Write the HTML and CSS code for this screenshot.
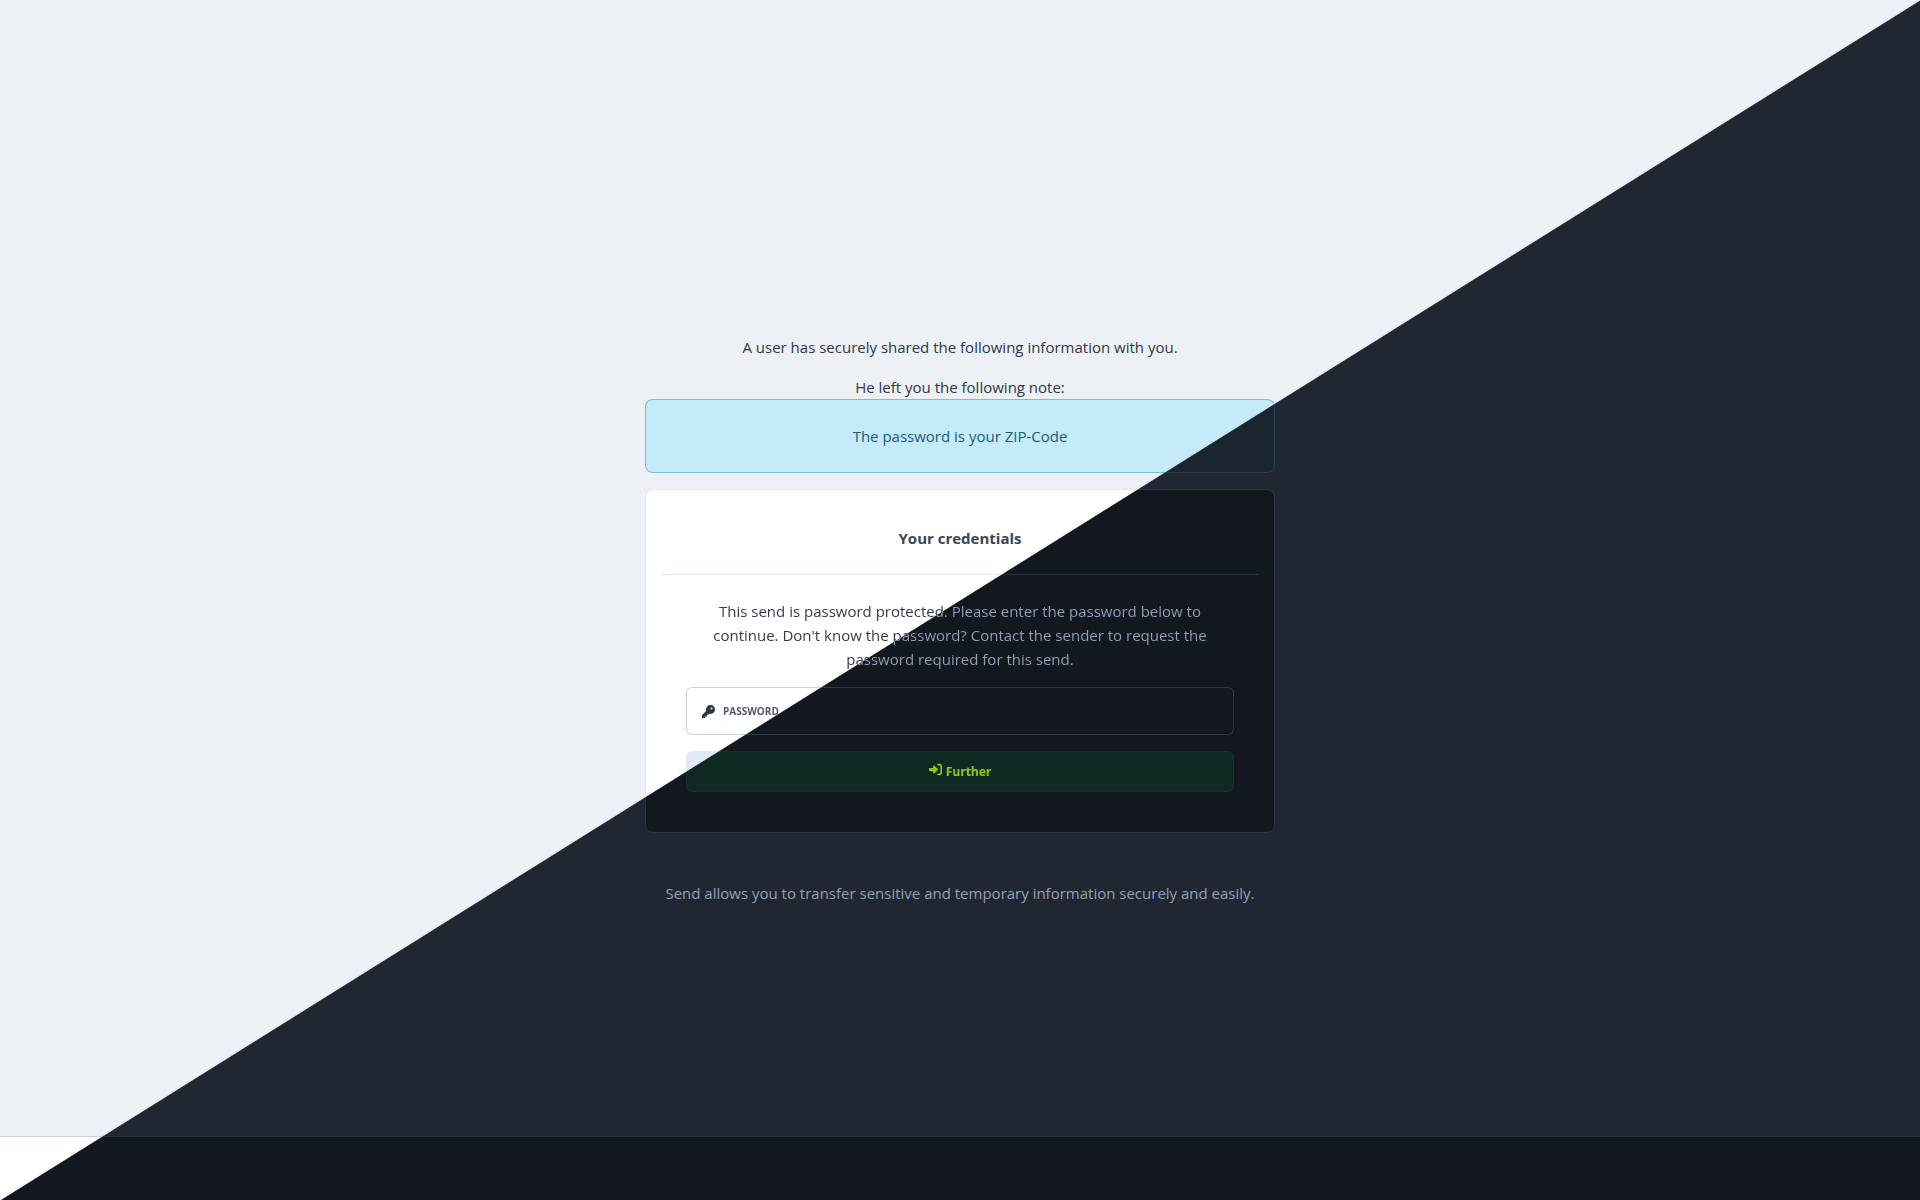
FILE: index.html
```
<!DOCTYPE html>
<html lang="en">
<head>
    <meta charset="UTF-8">
    <meta name="viewport" content="width=device-width, initial-scale=1.0">
    <title>Send</title>
    <link rel="stylesheet" href="styles.css">
</head>
<body>

    <main class="send">
        <div class="send-content">
            <p class="intro">A user has securely shared the following information with you.</p>
            <p class="intro">He left you the following note:</p>

            <!-- Note of the sender -->
            <div class="note">The password is your ZIP-Code</div>

            <!-- Password form -->
            <form class="card">
                <h1 class="card-title">Your credentials</h1>
                <div class="card-body">
                    <p class="card-text">This send is password protected. Please enter the password below to continue. Don't know the password? Contact the sender to request the password required for this send.</p>

                    <div class="field">
                        <svg class="key-icon" viewBox="0 0 512 512" aria-hidden="true">
                            <path d="M336 352c97.200 0 176-78.800 176-176S433.200 0 336 0S160 78.800 160 176c0 18.700 2.900 36.800 8.300 53.700L7 391c-4.500 4.500-7 10.600-7 17v80c0 13.300 10.700 24 24 24h80c13.300 0 24-10.700 24-24v-40h40c13.300 0 24-10.700 24-24v-40h40c6.400 0 12.500-2.500 17-7l33.300-33.300c16.900 5.400 35 8.300 53.700 8.300zM376 96a40 40 0 1 1 0 80 40 40 0 1 1 0-80z"/>
                        </svg>
                        <label class="field-label" for="password">PASSWORD</label>
                        <input class="field-input" type="password" id="password" name="password">
                    </div>

                    <button class="submit-button" type="submit">
                        <svg class="enter-icon" viewBox="0 0 512 512" aria-hidden="true">
                            <path d="M217.900 105.900L340.700 228.700c7.200 7.200 11.300 17.100 11.300 27.300s-4.100 20.100-11.300 27.300L217.900 406.100c-6.400 6.400-15 9.900-24 9.900c-18.700 0-33.900-15.200-33.900-33.900V320H32c-17.700 0-32-14.300-32-32v-64c0-17.700 14.300-32 32-32h128v-62.100c0-18.700 15.200-33.900 33.900-33.900c9 0 17.600 3.600 24 9.900zM352 416h64c17.700 0 32-14.300 32-32V128c0-17.700-14.300-32-32-32h-64c-17.700 0-32-14.300-32-32s14.300-32 32-32h64c53 0 96 43 96 96v256c0 53-43 96-96 96h-64c-17.700 0-32-14.300-32-32s14.300-32 32-32z"/>
                        </svg>
                        Further
                    </button>
                </div>
            </form>

            <p class="about">Send allows you to transfer sensitive and temporary information securely and easily.</p>
        </div>
    </main>

    <footer class="footer"></footer>

</body>
</html>
```
FILE: styles.css
```
/* The light and dark theme meet on the diagonal of the window.
   All split backgrounds are fixed, so they share the same edge. */
:root {
    --edge: calc(50% + 1px);
}

* {
    box-sizing: border-box;
}

body {
    margin: 0;
    min-height: 100vh;
    display: flex;
    flex-direction: column;
    font-family: "Open Sans", "Noto Sans", sans-serif;
    font-size: 15px;
    line-height: 24px;
    text-align: center;
    color: #2d3748;
    background: linear-gradient(to bottom right, #edf1f5 50%, #212732 var(--edge)) fixed;
}

p,
h1 {
    margin: 0;
}

.send {
    flex: 1;
    display: flex;
    justify-content: center;
    align-items: center;
    padding-top: 104px;
}

.send-content {
    width: 100%;
    max-width: 630px;
}

.intro + .intro {
    margin-top: 16px;
}

.note {
    padding: 24px;
    border: 1px solid transparent;
    border-radius: 8px;
    color: #155e75;
    background:
        linear-gradient(to bottom right, #c5ebfb 50%, #1c2630 var(--edge)) fixed padding-box,
        linear-gradient(to bottom right, #79bfd2 50%, #20414d var(--edge)) fixed border-box;
}

.card {
    margin-top: 16px;
    padding: 16px 16px 40px;
    border: 1px solid transparent;
    border-radius: 8px;
    background:
        linear-gradient(to bottom right, #ffffff 50%, #131720 var(--edge)) fixed padding-box,
        linear-gradient(to bottom right, #e2e8f0 50%, #2a3441 var(--edge)) fixed border-box;
}

.card-title {
    padding: 20px 0 24px;
    border-bottom: 1px solid transparent;
    font-size: 15px;
    line-height: 24px;
    font-weight: bold;
    color: #3a4557;
    background:
        linear-gradient(to bottom right, #ffffff 50%, #131720 var(--edge)) fixed padding-box,
        linear-gradient(to bottom right, #e2e8f0 50%, #273140 var(--edge)) fixed border-box;
}

.card-body {
    padding: 24px 24px 0;
}

.card-text {
    padding: 0 16px;
    color: transparent;
    background: linear-gradient(to bottom right, #2d3748 50%, #94a1b5 var(--edge)) fixed text;
}

.field {
    display: flex;
    align-items: center;
    height: 48px;
    margin-top: 16px;
    padding: 0 15px;
    border: 1px solid transparent;
    border-radius: 6px;
    background:
        linear-gradient(to bottom right, #ffffff 50%, #131720 var(--edge)) fixed padding-box,
        linear-gradient(to bottom right, #cbd2dc 50%, #2b3a4b var(--edge)) fixed border-box;
}

.key-icon {
    width: 13px;
    height: 13px;
    fill: #2d3748;
}

.field-label {
    margin-left: 8px;
    font-size: 10px;
    font-weight: bold;
    color: transparent;
    background: linear-gradient(to bottom right, #4a5568 50%, #131720 var(--edge)) fixed text;
}

.field-input {
    flex: 1;
    min-width: 0;
    padding: 8px;
    border: none;
    outline: none;
    font: inherit;
    color: #94a1b5;
    background: transparent;
}

.submit-button {
    display: flex;
    justify-content: center;
    align-items: center;
    gap: 4px;
    width: 100%;
    height: 41px;
    margin-top: 16px;
    border: 1px solid transparent;
    border-radius: 6px;
    font-family: inherit;
    font-size: 12px;
    font-weight: bold;
    color: #84cc16;
    cursor: pointer;
    background:
        linear-gradient(to bottom right, #e2eafa 50%, #112923 var(--edge)) fixed padding-box,
        linear-gradient(to bottom right, #e2eafa 50%, #143325 var(--edge)) fixed border-box;
}

.enter-icon {
    width: 13px;
    height: 13px;
    margin-bottom: 4px;
    fill: currentColor;
}

.about {
    margin-top: 48px;
    color: #94a1b5;
}

.footer {
    height: 64px;
    border-top: 1px solid transparent;
    background:
        linear-gradient(to bottom right, #ffffff 50%, #131720 var(--edge)) fixed padding-box,
        linear-gradient(to bottom right, #cbd2dc 50%, #2a3441 var(--edge)) fixed border-box;
}
```
